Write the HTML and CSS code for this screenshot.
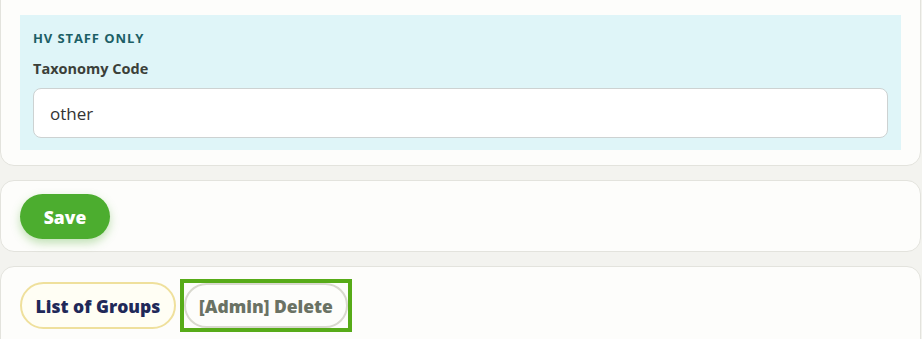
FILE: index.html
```html
<!DOCTYPE html>
<html>
<head>
<meta charset="utf-8">
<link rel="stylesheet" href="styles.css">
</head>
<body>
<div class="page">
  <section class="card card-first">
    <div class="staff">
      <div class="staff-title">HV STAFF ONLY</div>
      <label class="field-label">Taxonomy Code</label>
      <div class="input">other</div>
    </div>
  </section>
  <section class="card card-save">
    <button class="btn btn-save">Save</button>
  </section>
  <section class="card card-actions">
    <button class="btn btn-list">List of Groups</button>
    <span class="focus-ring"><button class="btn btn-delete">[Admin] Delete</button></span>
  </section>
</div>
</body>
</html>
```
FILE: styles.css
```css
html, body {
  margin: 0;
  padding: 0;
  background: #f3f3ef;
  font-family: "Open Sans", "Lato", sans-serif;
}
.page {
  width: 921px;
  display: flex;
  flex-direction: column;
  gap: 14px;
  margin-top: -30px;
}
.card {
  background: #fdfdfb;
  border: 1px solid #e3e3dd;
  border-radius: 14px;
}
.card-first {
  padding: 44px 19px 15px 19px;
}
.staff {
  background: #dff5f8;
  padding: 14px 13px 12px 13px;
}
.staff-title {
  font-size: 13px;
  font-weight: 700;
  color: #1c5f66;
  letter-spacing: 0.9px;
  line-height: 18px;
}
.field-label {
  display: block;
  margin-top: 12px;
  font-size: 14.5px;
  font-weight: 700;
  color: #3b4039;
  line-height: 20px;
}
.input {
  margin-top: 9px;
  height: 48px;
  border: 1px solid #cdd2d2;
  border-radius: 8px;
  background: #ffffff;
  display: flex;
  align-items: center;
  padding-left: 16px;
  font-size: 17px;
  color: #333333;
}
.card-save {
  padding: 13px 19px 12px 19px;
}
.btn {
  font-family: inherit;
  font-weight: 800;
  font-size: 17.5px;
  border-radius: 24px;
  cursor: pointer;
  padding: 0;
}
.btn-save {
  width: 90px;
  height: 45px;
  border: none;
  background: #4cad2f;
  color: #ffffff;
  box-shadow: 0 4px 10px rgba(76, 173, 47, 0.35);
}
.card-actions {
  padding: 12px 19px 20px 19px;
  display: flex;
  gap: 4px;
  align-items: center;
}
.btn-list {
  height: 47px;
  width: 156px;
  background: #fffef4;
  border: 2px solid #efe09c;
  color: #1f2959;
}
.focus-ring {
  display: flex;
  border: 4px solid #57ab18;
}
.btn-delete {
  height: 45px;
  width: 164px;
  background: #fdfdfb;
  border: 2px solid #d9d9cf;
  color: #6a7264;
}
```
